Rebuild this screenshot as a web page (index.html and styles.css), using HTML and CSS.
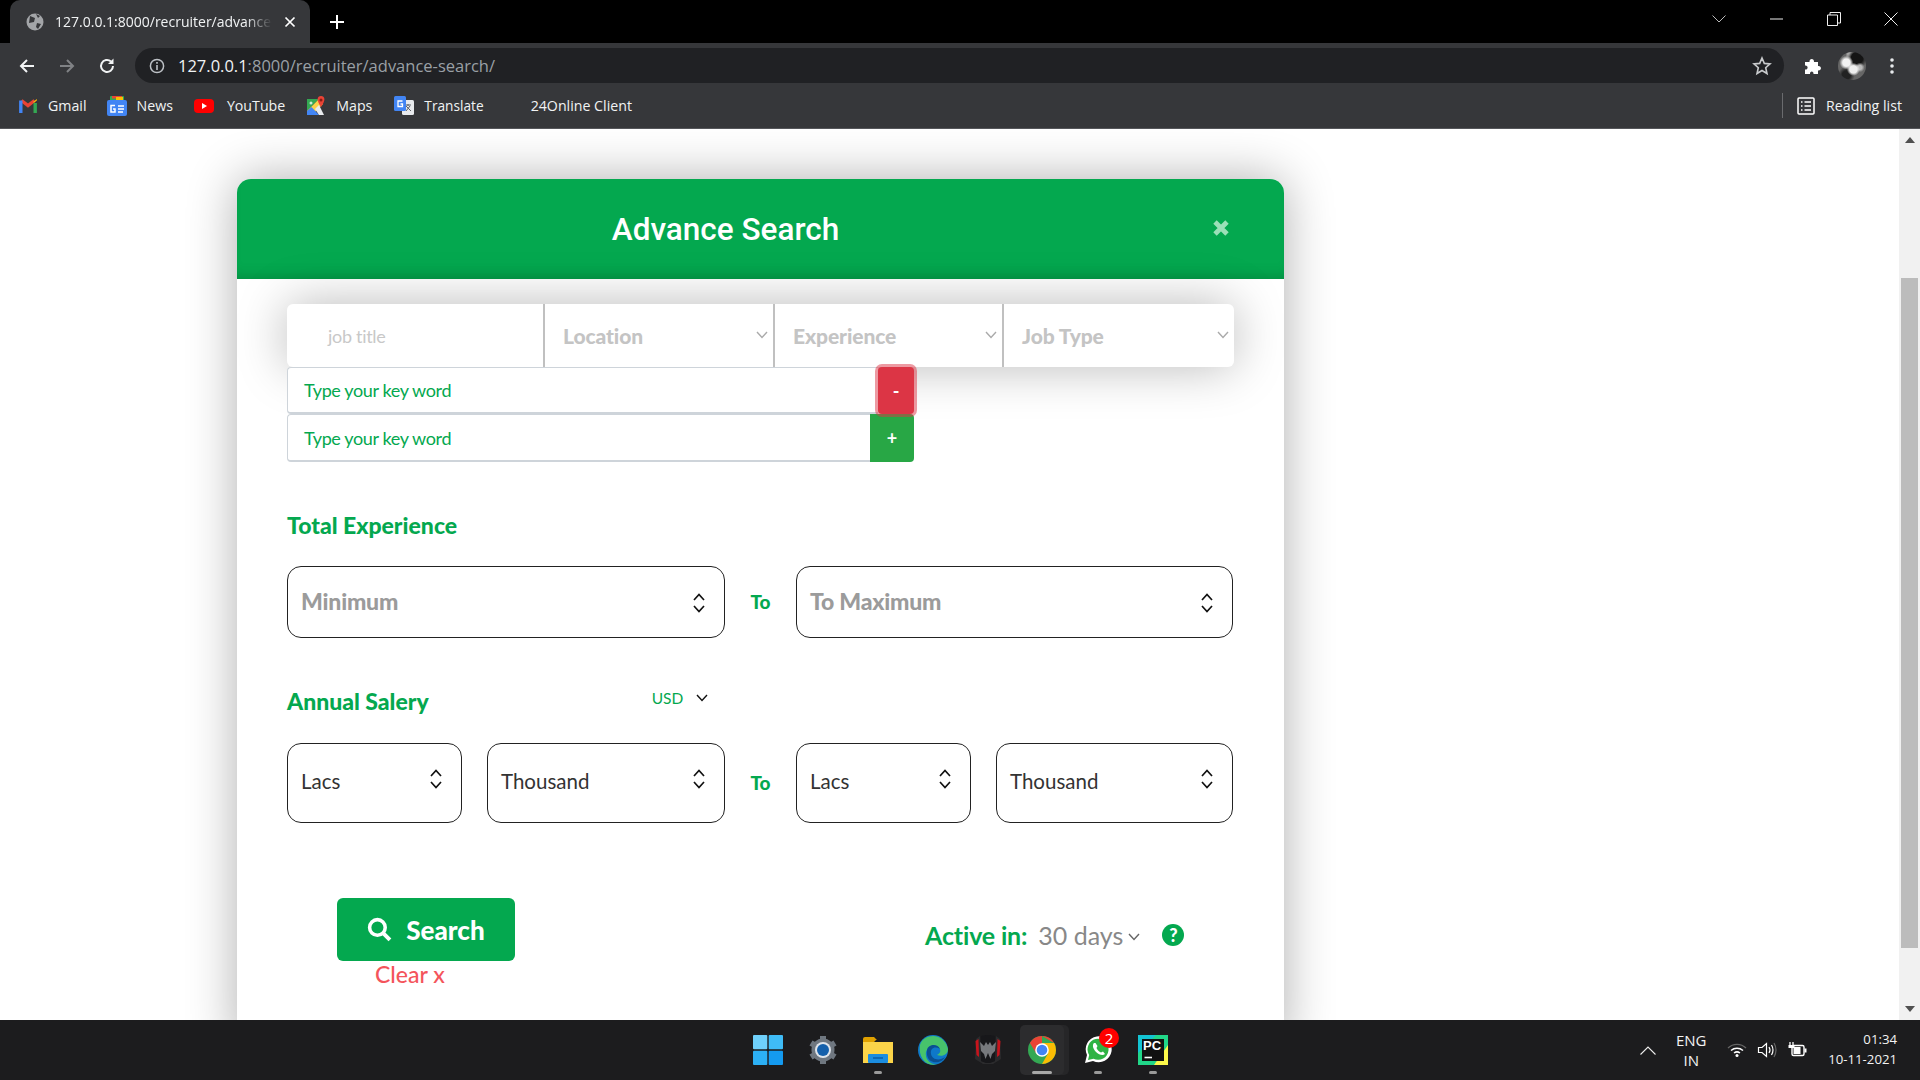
FILE: index.html
```html
<!DOCTYPE html>
<html lang="en">
<head>
    <meta charset="UTF-8">
    <meta name="viewport" content="width=device-width, initial-scale=1.0">
    <title>Advance Search</title>
    <link rel="stylesheet" href="styles.css">
</head>
<body>
    <svg class="defs" width="0" height="0">
        <symbol id="updown" viewBox="0 0 14 22">
            <path d="M2 8 L7 2.5 L12 8 M2 14 L7 19.5 L12 14" fill="none" stroke="#111" stroke-width="1.7"/>
        </symbol>
        <symbol id="down" viewBox="0 0 12 8">
            <path d="M1 1 L6 6.5 L11 1" fill="none" stroke="currentColor" stroke-width="1.4"/>
        </symbol>
    </svg>

    <!-- browser chrome -->
    <div class="tabbar">
        <div class="tab">
            <svg class="favicon" viewBox="0 0 18 18"><circle cx="9" cy="9" r="8.5" fill="#a3a5a8"/><path d="M4 3 L9 5 L8 9 L3 10 Z M11 10 L15 11 L12 16 L10 14 Z M10 1 L14 3 L12 5 Z" fill="#36373a"/></svg>
            <span class="tab-title">127.0.0.1:8000/recruiter/advance-</span>
            <svg class="tab-close" viewBox="0 0 12 12"><path d="M1.5 1.5 L10.5 10.5 M10.5 1.5 L1.5 10.5" stroke="#fff" stroke-width="1.7"/></svg>
        </div>
        <svg class="new-tab" viewBox="0 0 16 16"><path d="M8 1 V15 M1 8 H15" stroke="#fff" stroke-width="2"/></svg>
        <div class="window-controls">
            <svg class="win-chevron" viewBox="0 0 14 8"><path d="M.5 .5 L7 7 L13.5 .5" fill="none" stroke="#bbb"/></svg>
            <svg class="win-btn" viewBox="0 0 14 14"><path d="M0 7 H13" stroke="#eee"/></svg>
            <svg class="win-btn" viewBox="0 0 14 14"><path d="M.5 3 H10.5 V13.5 H.5 Z M3 3 V.5 H13.5 V11 H10.5" fill="none" stroke="#eee"/></svg>
            <svg class="win-btn" viewBox="0 0 14 14"><path d="M.5 .5 L13.5 13.5 M13.5 .5 L.5 13.5" stroke="#eee"/></svg>
        </div>
    </div>

    <div class="toolbar">
        <svg class="nav-icon" viewBox="0 0 18 18"><path d="M16 9 H3 M9 3 L3 9 L9 15" fill="none" stroke="#f1f3f4" stroke-width="2"/></svg>
        <svg class="nav-icon" viewBox="0 0 18 18"><path d="M2 9 H15 M9 3 L15 9 L9 15" fill="none" stroke="#808285" stroke-width="2"/></svg>
        <svg class="nav-icon" viewBox="0 0 18 18"><path d="M15 9 A6 6 0 1 1 13 4.5" fill="none" stroke="#f1f3f4" stroke-width="2"/><path d="M15.5 1.5 V7 H10 Z" fill="#f1f3f4"/></svg>
        <div class="omnibox">
            <svg class="info" viewBox="0 0 16 16"><circle cx="8" cy="8" r="6.6" fill="none" stroke="#bdc1c6" stroke-width="1.5"/><path d="M8 7 V12 M8 4 V5.7" stroke="#bdc1c6" stroke-width="1.6"/></svg>
            <span class="url"><b>127.0.0.1</b>:8000/recruiter/advance-search/</span>
            <svg class="star" viewBox="0 0 20 20"><path d="M10 2 L12.3 7.4 L18 7.9 L13.7 11.7 L15 17.5 L10 14.5 L5 17.5 L6.3 11.7 L2 7.9 L7.7 7.4 Z" fill="none" stroke="#c8cacc" stroke-width="1.6"/></svg>
        </div>
        <svg class="puzzle" viewBox="0 0 20 20"><path d="M2 6 H6.5 C6 2 11.500 2 11 6 H15 V10 C19 9.500 19 15 15 14.500 V18 H10.500 C11 14.500 6.500 14.500 7 18 H2 V13.500 C5.500 14 5.500 9 2 9.500 Z" fill="#fff"/></svg>
        <div class="avatar"></div>
        <svg class="dots" viewBox="0 0 4 18"><circle cx="2" cy="3" r="1.800" fill="#e8eaed"/><circle cx="2" cy="9" r="1.800" fill="#e8eaed"/><circle cx="2" cy="15" r="1.800" fill="#e8eaed"/></svg>
    </div>

    <div class="bookmarks">
        <a class="mark mark-gmail">
            <svg viewBox="0 0 20 20"><path d="M3.500 4.500 L10 9.500 L16.500 4.500" fill="none" stroke="#ea4335" stroke-width="3.400"/><path d="M2.800 17 V4.500" stroke="#4285f4" stroke-width="3.400"/><path d="M17.200 17 V7" stroke="#34a853" stroke-width="3.400"/><path d="M15.500 7 L18.900 4.500 V3 L15.500 5.500 Z" fill="#fbbc04"/></svg>
            Gmail
        </a>
        <a class="mark mark-news">
            <svg viewBox="0 0 20 20"><rect x="3" y="0" width="14" height="6" rx="1" fill="#34a853"/><rect x="5" y="0" width="10" height="2.500" fill="#ea4335"/><rect x="9" y="1" width="7" height="3" fill="#fbbc04"/><rect x="0" y="4" width="20" height="16" rx="2" fill="#4285f4"/><path d="M11 10 H17 M11 13 H17 M11 16 H16" stroke="#fff" stroke-width="1.500"/><path d="M8 9.500 H4 V16 H8 V13 H6" fill="none" stroke="#fff" stroke-width="1.500"/></svg>
            News
        </a>
        <a class="mark mark-youtube">
            <svg viewBox="0 0 20 14"><rect width="20" height="14" rx="4" fill="#f00"/><path d="M8 4 L13 7 L8 10 Z" fill="#fff"/></svg>
            YouTube
        </a>
        <a class="mark mark-maps">
            <svg viewBox="0 0 20 20"><path d="M1 3 H13 L1 15 Z" fill="#34a853"/><path d="M1 15 L13 3 L17 8 L6 19 H1 Z" fill="#fbd24a"/><path d="M1 15 L5.500 11 L13 19 H1 Z" fill="#4285f4"/><path d="M9 13 L13 9 L18 19 H13 Z" fill="#e8eaed"/><path d="M15 0 C11 0 10 4 15 11 C20 4 19 0 15 0 Z" fill="#ea4335"/><circle cx="15" cy="4" r="1.500" fill="#8a1c14"/><circle cx="5" cy="7" r="1.500" fill="#cfe8d6"/></svg>
            Maps
        </a>
        <a class="mark mark-translate">
            <svg viewBox="0 0 20 20"><rect x="8" y="4" width="12" height="15" rx="1.500" fill="#e8eaed"/><path d="M11 9 H17 M14 8 V10 M12 15 L16 10 M12 10 L17 15" stroke="#5f6368" stroke-width="1"/><rect width="12" height="15" rx="1.500" fill="#4285f4"/><path d="M8.500 5 H4 V10.500 H8.500 V8 H6.500" fill="none" stroke="#fff" stroke-width="1.300"/></svg>
            <span class="mark-narrow">Translate</span>
        </a>
        <a class="mark mark-plain">24Online Client</a>
        <div class="reading">
            <svg viewBox="0 0 18 18"><rect x="1" y="1" width="16" height="16" rx="1" fill="none" stroke="#fff" stroke-width="1.500"/><path d="M4 5 H5.500 M7.500 5 H14 M4 9 H5.500 M7.500 9 H14 M4 13 H5.500 M7.500 13 H14" stroke="#fff" stroke-width="1.500"/></svg>
            Reading list
        </div>
    </div>

    <!-- page -->
    <div class="viewport">
        <div class="page">
            <div class="modal">
                <div class="modal-head">
                    <h1>Advance Search</h1>
                    <svg class="modal-close" viewBox="0 0 12 12"><path d="M2 2 L10 10 M10 2 L2 10" stroke="#9be0b8" stroke-width="3.200"/></svg>
                </div>
                <div class="modal-body">
                    <div class="filters">
                        <div class="filter filter-title">job title</div>
                        <div class="filter">Location<svg class="filter-arrow"><use href="#down"/></svg></div>
                        <div class="filter filter-mid">Experience<svg class="filter-arrow"><use href="#down"/></svg></div>
                        <div class="filter filter-last">Job Type<svg class="filter-arrow"><use href="#down"/></svg></div>
                    </div>

                    <div class="keyword">
                        <div class="keyword-input">Type your key word</div>
                        <div class="btn-minus">-</div>
                    </div>
                    <div class="keyword keyword-add">
                        <div class="keyword-input">Type your key word</div>
                        <div class="btn-plus">+</div>
                    </div>

                    <h3 class="label label-exp">Total Experience</h3>
                    <div class="range">
                        <div class="box box-big">Minimum<svg class="updown"><use href="#updown"/></svg></div>
                        <div class="to">To</div>
                        <div class="box box-big">To Maximum<svg class="updown"><use href="#updown"/></svg></div>
                    </div>

                    <div class="salary-head">
                        <h3 class="label">Annual Salery</h3>
                        <div class="currency">USD<svg class="currency-arrow"><use href="#down"/></svg></div>
                    </div>
                    <div class="range range-salary">
                        <div class="pair">
                            <div class="box box-small">Lacs<svg class="updown updown-top"><use href="#updown"/></svg></div>
                            <div class="box box-small">Thousand<svg class="updown updown-top"><use href="#updown"/></svg></div>
                        </div>
                        <div class="to to-low">To</div>
                        <div class="pair">
                            <div class="box box-small">Lacs<svg class="updown updown-top"><use href="#updown"/></svg></div>
                            <div class="box box-small">Thousand<svg class="updown updown-top"><use href="#updown"/></svg></div>
                        </div>
                    </div>

                    <div class="actions">
                        <div class="search-col">
                            <button class="btn-search">
                                <svg viewBox="0 0 24 24"><circle cx="10" cy="10" r="7.500" fill="none" stroke="#fff" stroke-width="3.400"/><path d="M15.500 15.500 L22 22" stroke="#fff" stroke-width="3.800"/></svg>
                                Search
                            </button>
                            <a class="clear">Clear x</a>
                        </div>
                        <div class="active-in">
                            <b>Active in:</b>
                            <span>30 days</span>
                            <svg class="active-arrow"><use href="#down"/></svg>
                            <span class="help">?</span>
                        </div>
                    </div>
                </div>
            </div>
        </div>
        <div class="scrollbar">
            <svg class="scroll-arrow" viewBox="0 0 10 6"><path d="M5 0 L10 6 H0 Z" fill="#505050"/></svg>
            <div class="scroll-track"><div class="scroll-thumb"></div></div>
            <svg class="scroll-arrow" viewBox="0 0 10 6"><path d="M0 0 H10 L5 6 Z" fill="#505050"/></svg>
        </div>
    </div>

    <!-- windows taskbar -->
    <div class="taskbar">
        <div class="task-icons">
            <div class="task">
                <svg viewBox="0 0 30 30"><rect x="0" y="0" width="14.300" height="14.300" rx="1" fill="#6fd0fb"/><rect x="15.700" y="0" width="14.300" height="14.300" rx="1" fill="#3fbcf7"/><rect x="0" y="15.700" width="14.300" height="14.300" rx="1" fill="#2cb0f5"/><rect x="15.700" y="15.700" width="14.300" height="14.300" rx="1" fill="#149af0"/></svg>
            </div>
            <div class="task">
                <svg viewBox="0 0 30 30"><circle cx="15" cy="15" r="11.500" fill="#6f7780"/><path d="M15 1 V29 M3 8 L27 22 M27 8 L3 22" stroke="#6f7780" stroke-width="6"/><circle cx="15" cy="15" r="8" fill="#dfe4ea"/><circle cx="15" cy="15" r="6" fill="#1560ab"/></svg>
            </div>
            <div class="task task-open">
                <svg viewBox="0 0 30 30"><path d="M0 4 Q0 2 2 2 H11 L14 5 H13 L10 8 H0 Z" fill="#e0a100"/><path d="M0 7 H30 V28 H0 Z" fill="#fbd449"/><rect x="5" y="19" width="20" height="9" rx="1" fill="#1b8de0"/><path d="M10 23 H20" stroke="#0a5ea8" stroke-width="1.500"/></svg>
            </div>
            <div class="task">
                <svg viewBox="0 0 30 30"><circle cx="15" cy="15" r="15" fill="#0e78c9"/><path d="M2 10 C6 -2 26 -3 30 14 C30 20 24 22 19 20 C25 17 22 11 16 11 C9 11 6 18 9 24 C12 29 18 30 20 29 C10 32 0 25 2 10 Z" fill="#47c36b"/><path d="M9 15 C10 9 20 8 22 14 C17 11 12 13 13 19 C14 25 22 26 27 22 C23 30 7 30 9 15 Z" fill="#0a4f92"/></svg>
            </div>
            <div class="task">
                <svg viewBox="0 0 30 30"><path d="M3 4 L7 1 L8 26 L14 28 H16 L22 26 L23 1 L27 4 L28 24 L20 29 H10 L2 24 Z" fill="#2b2b2d"/><path d="M8 1 L13 0 V28 L8 26 Z M17 0 L22 1 L22 26 L17 28 Z M13 0 H17 V28 H13 Z" fill="#17171a"/><path d="M2.500 6 L5.500 4 L6 22 L3.500 20 Z M27.500 6 L24.500 4 L24 22 L26.500 20 Z" fill="#c8141c"/><path d="M7 7 L11 11 L13 7 L15 10 L17 7 L19 11 L23 7 L22 16 L19 19 L17.500 24 L15 18 L12.500 24 L11 19 L8 16 Z" fill="#77797d"/></svg>
            </div>
            <div class="task task-chrome">
                <svg viewBox="0 0 30 30"><circle cx="15" cy="15" r="14" fill="#34a853"/><path d="M15 1 A14 14 0 0 1 27.100 8 L15 8 Z M15 1 A14 14 0 0 0 2.900 8 L9 18 L15 8 H27.100 Z" fill="#ea4335"/><path d="M27.100 8 A14 14 0 0 1 15 29 L21 18.500 L15 8 Z" fill="#fbbc04"/><circle cx="15" cy="15" r="6.800" fill="#fff"/><circle cx="15" cy="15" r="5.300" fill="#4285f4"/></svg>
            </div>
            <div class="task task-open">
                <svg viewBox="0 0 30 30"><path d="M2 28 L4 20 A13 13 0 1 1 10 26 Z" fill="#fff"/><path d="M5 25 L6.200 20 A10.500 10.500 0 1 1 10.500 23.800 Z" fill="#2fb344"/><path d="M11 8 C9 10 10 14 13 17 C16 20 20 21 22 19 L20 16.500 L18 17.500 C16 16.500 14.500 15 13.500 13 L14.500 11 L12.500 8 Z" fill="#fff"/></svg>
                <span class="badge">2</span>
            </div>
            <div class="task task-open">
                <svg viewBox="0 0 30 30"><rect width="30" height="30" fill="#21d789"/><path d="M0 0 H18 L0 18 Z" fill="#13c4d3"/><path d="M30 10 V30 H16 Z" fill="#fcf84a"/><rect x="4" y="4" width="22" height="22" fill="#111"/><path d="M6.500 22.500 H14" stroke="#fff" stroke-width="1.600"/></svg>
                <span class="pc">PC</span>
            </div>
        </div>
        <div class="tray">
            <svg class="tray-up" viewBox="0 0 16 9"><path d="M.5 8.500 L8 1 L15.500 8.500" fill="none" stroke="#eee" stroke-width="1.100"/></svg>
            <div class="lang">ENG<br>IN</div>
            <svg class="tray-icon" viewBox="0 0 20 16"><path d="M1 6 A13 13 0 0 1 19 6" fill="none" stroke="#666" stroke-width="1.300"/><path d="M4 8.500 A9 9 0 0 1 16 8.500 M7 11 A5 5 0 0 1 13 11" fill="none" stroke="#fff" stroke-width="1.500"/><circle cx="10" cy="13.500" r="1.500" fill="#fff"/></svg>
            <svg class="tray-icon" viewBox="0 0 20 16"><path d="M1.500 5.500 H5 L9.500 1.500 V14.500 L5 10.500 H1.500 Z" fill="none" stroke="#fff" stroke-width="1.200"/><path d="M12 5 Q14 8 12 11 M14.500 3 Q17.500 8 14.500 13" fill="none" stroke="#fff" stroke-width="1.200"/><path d="M17 1 Q21 8 17 15" fill="none" stroke="#666" stroke-width="1.200"/></svg>
            <svg class="tray-icon" viewBox="0 0 20 16"><path d="M3 0 V3 M6 0 V3" stroke="#fff" stroke-width="1.300"/><rect x="1.500" y="3" width="6" height="3" fill="#fff"/><rect x="5" y="3.500" width="12" height="10" rx="1.500" fill="none" stroke="#fff" stroke-width="1.400"/><rect x="6.500" y="5" width="7" height="7" fill="#fff"/><rect x="17.500" y="6.500" width="2" height="4" fill="#fff"/></svg>
            <div class="clock">01:34<br>10-11-2021</div>
        </div>
    </div>
</body>
</html>
```

FILE: styles.css
```css
* {
    box-sizing: border-box;
}

html, body {
    margin: 0;
    height: 100%;
    overflow: hidden;
}

body {
    display: flex;
    flex-direction: column;
    font-family: "Lato", "Liberation Sans", sans-serif;
    background: #fff;
}

.defs {
    position: absolute;
}

/* browser chrome */
.tabbar {
    height: 43px;
    flex: none;
    background: #000;
    display: flex;
    align-items: flex-end;
    padding-left: 10px;
}

.tab {
    width: 300px;
    height: 43px;
    margin-top: 0;
    background: #36373a;
    border-radius: 10px 10px 0 0;
    display: flex;
    align-items: center;
    padding: 0 14px 0 16px;
    color: #f1f3f4;
    font: 14px "Open Sans", sans-serif;
}

.favicon {
    width: 18px;
    height: 18px;
    flex: none;
    margin-right: 11px;
}

.tab-title {
    flex: 1;
    min-width: 0;
    white-space: nowrap;
    -webkit-mask-image: linear-gradient(90deg, #000 88%, transparent);
    mask-image: linear-gradient(90deg, #000 88%, transparent);
}

.tab-close {
    width: 12px;
    height: 12px;
    margin-left: 12px;
    flex: none;
}

.new-tab {
    width: 16px;
    height: 16px;
    margin: 0 0 13px 19px;
}

.window-controls {
    margin-left: auto;
    align-self: stretch;
    display: flex;
    align-items: center;
    padding: 0 22px 5px 0;
}

.win-chevron {
    width: 14px;
    height: 8px;
    margin-right: 44px;
}

.win-btn {
    width: 14px;
    height: 14px;
    margin-left: 43px;
}

.win-chevron + .win-btn {
    margin-left: 0;
}

.toolbar {
    height: 40px;
    flex: none;
    background: #36373a;
    padding: 5px 0 0 18px;
    display: flex;
    align-items: center;
}

.nav-icon {
    width: 18px;
    height: 18px;
    margin-right: 22px;
    flex: none;
}

.omnibox {
    width: 1649px;
    height: 35px;
    margin-left: -3px;
    background: #202124;
    border-radius: 18px;
    display: flex;
    align-items: center;
    padding: 0 12px 0 14px;
    font: 16.5px "Open Sans", sans-serif;
    color: #9aa0a6;
}

.info {
    width: 16px;
    height: 16px;
    margin-right: 13px;
}

.url b {
    font-weight: 400;
    color: #f1f3f4;
}

.star {
    width: 20px;
    height: 20px;
    margin-left: auto;
}

.puzzle {
    width: 20px;
    height: 20px;
    margin-left: 19px;
}

.avatar {
    width: 28px;
    height: 28px;
    margin-left: 15px;
    border-radius: 50%;
    background:
        radial-gradient(circle at 30% 38%, #f2f2f2 0 14%, transparent 26%),
        radial-gradient(circle at 55% 62%, #eee 0 16%, transparent 28%),
        radial-gradient(circle at 78% 55%, #bbb 0 8%, transparent 18%),
        radial-gradient(circle at 68% 22%, #141414 0 20%, transparent 36%),
        radial-gradient(circle at 30% 82%, #222 0 14%, transparent 28%),
        radial-gradient(circle at 50% 10%, #ddd 0 10%, transparent 22%),
        #666;
}

.dots {
    width: 4px;
    height: 18px;
    margin-left: 24px;
}

.bookmarks {
    height: 46px;
    flex: none;
    background: #36373a;
    border-bottom: 1px solid #55565a;
    padding: 0 18px 0 18px;
    display: flex;
    align-items: center;
    color: #f1f3f4;
    font: 14.2px "Open Sans", sans-serif;
}

.mark {
    display: flex;
    align-items: center;
    gap: 10px;
    white-space: nowrap;
}

.mark svg {
    width: 20px;
    height: 20px;
    flex: none;
}

.mark-news {
    margin-left: 20px;
}

.mark-youtube {
    margin-left: 21px;
    gap: 13px;
}

.mark-maps {
    margin-left: 21px;
}

.mark-translate {
    margin-left: 22px;
    gap: 10px;
}

.mark-narrow {
    font-size: 13.700px;
}

.mark-plain {
    margin-left: 47px;
}

.reading {
    margin-left: auto;
    height: 25px;
    padding-left: 14px;
    border-left: 1px solid #6a6b6e;
    display: flex;
    align-items: center;
    gap: 11px;
    white-space: nowrap;
}

.reading svg {
    width: 18px;
    height: 18px;
}

/* page */
.viewport {
    flex: 1;
    min-height: 0;
    display: flex;
    overflow: hidden;
}

.page {
    flex: 1;
    padding: 50px 0 0 237px;
    overflow: hidden;
}

.modal {
    width: 1047px;
    background: #fff;
    border-radius: 14px 14px 0 0;
    box-shadow: 0 0 50px rgba(0, 0, 0, 0.32);
    padding-bottom: 60px;
}

.modal-head {
    height: 100px;
    position: relative;
    background: #04a84f;
    border-radius: 14px 14px 0 0;
    box-shadow: inset 0 -12px 12px -8px rgba(0, 90, 40, 0.3);
    display: flex;
    align-items: center;
    justify-content: center;
    padding: 0 70px 0 0;
}

.modal-head h1 {
    margin: 0;
    color: #fff;
    font: 500 31.500px "Roboto", sans-serif;
}

.modal-close {
    position: absolute;
    right: 54px;
    top: 40px;
    width: 18px;
    height: 18px;
}

.modal-body {
    padding: 25px 50px 0 50px;
}

.filters {
    height: 63px;
    display: flex;
    background: #fff;
    border-radius: 6px;
    box-shadow: 0 0 50px rgba(0, 0, 0, 0.28);
    position: relative;
}

.filter {
    flex: 0 0 230px;
    position: relative;
    display: flex;
    align-items: center;
    padding-left: 18px;
    border-left: 2px solid #c0c0c0;
    color: #c4c4c4;
    font-size: 21px;
    font-weight: 900;
    letter-spacing: -0.1px;
}

.filter-title {
    flex-basis: 256px;
    padding-left: 41px;
    border-left: 0;
    color: #c8c8c8;
    font-size: 18px;
    font-weight: 400;
    letter-spacing: -0.3px;
}

.filter-mid {
    flex-basis: 229px;
}

.filter-last {
    flex: 1;
}

.filter-arrow {
    position: absolute;
    right: 5px;
    top: 27px;
    width: 12px;
    height: 8px;
    color: #aaa;
}

.keyword {
    width: 627px;
    height: 47px;
    display: flex;
    position: relative;
}

.keyword-add {
    height: 48px;
}

.keyword-input {
    flex: 1;
    display: flex;
    align-items: center;
    padding-left: 16px;
    background: #fff;
    border: 1px solid #ced4da;
    border-bottom-width: 2px;
    border-right: 0;
    border-radius: 4px 0 0 4px;
    color: #04a84f;
    font-size: 18px;
    letter-spacing: -0.36px;
}

.btn-minus, .btn-plus {
    display: flex;
    align-items: center;
    justify-content: center;
    color: #fff;
    font-size: 18px;
    font-weight: 700;
}

.btn-minus {
    flex: 0 0 36px;
    background: #dc3545;
    border-radius: 4px;
    box-shadow: 0 0 0 3px rgba(220, 53, 69, 0.5);
    z-index: 1;
}

.btn-plus {
    flex: 0 0 44px;
    background: #28a745;
    border-radius: 0 4px 4px 0;
}

.label {
    margin: 0;
    color: #04a84f;
    font-size: 23px;
    line-height: 28px;
    font-weight: 900;
}

.label-exp {
    margin-top: 49px;
}

.range {
    display: grid;
    grid-template-columns: 438px 71px 437px;
    margin-top: 27px;
}

.range-salary {
    margin-top: 28px;
}

.box {
    display: flex;
    align-items: center;
    position: relative;
    border: 1.5px solid #222;
    border-radius: 14px;
    padding-left: 13px;
    background: #fff;
}

.box-big {
    height: 72px;
    padding-bottom: 2px;
    color: #9b9b9b;
    font-size: 23px;
    font-weight: 900;
    letter-spacing: -0.2px;
}

.box-small {
    height: 80px;
    padding-bottom: 4px;
    color: #333;
    font-size: 20.500px;
}

.updown {
    position: absolute;
    right: 18px;
    top: 25px;
    width: 14px;
    height: 22px;
}

.updown-top {
    top: 24px;
}

.to {
    display: flex;
    align-items: center;
    justify-content: center;
    padding-bottom: 2px;
    color: #04a84f;
    font-size: 19px;
    font-weight: 900;
}

.pair {
    display: grid;
    grid-template-columns: 175px 1fr;
    gap: 25px;
}

.salary-head {
    margin-top: 49px;
    display: flex;
    align-items: flex-start;
}

.currency {
    margin-left: 223px;
    display: flex;
    align-items: center;
    color: #04a84f;
    font-size: 15.500px;
    line-height: 24px;
    gap: 13px;
    position: relative;
    top: -1px;
}

.currency-arrow {
    width: 12px;
    height: 8px;
    color: #111;
}

.actions {
    margin-top: 75px;
    display: flex;
}

.search-col {
    margin-left: 50px;
    display: flex;
    flex-direction: column;
}

.btn-search {
    width: 178px;
    height: 63px;
    border: 0;
    border-radius: 6px;
    background: #04a84f;
    color: #fff;
    display: flex;
    align-items: center;
    justify-content: center;
    gap: 14px;
    font: 900 26px "Lato", sans-serif;
}

.btn-search svg {
    width: 25px;
    height: 25px;
}

.clear {
    margin-left: 38px;
    color: #f4545b;
    font-size: 23px;
    line-height: 26px;
    font-weight: 500;
}

.active-in {
    margin-left: 410px;
    height: 74px;
    display: flex;
    align-items: center;
    font-size: 25px;
    color: #888;
}

.active-in b {
    color: #04a84f;
    font-weight: 700;
    letter-spacing: -0.15px;
    margin-right: 11px;
}

.active-arrow {
    width: 12px;
    height: 8px;
    margin: 3px 0 0 5px;
    color: #666;
}

.help {
    width: 22px;
    height: 22px;
    margin-left: 22px;
    border-radius: 50%;
    background: #04a84f;
    color: #fff;
    display: flex;
    align-items: center;
    justify-content: center;
    font-size: 18px;
    font-weight: 900;
}

.scrollbar {
    width: 21px;
    flex: none;
    background: #f1f1f1;
    display: flex;
    flex-direction: column;
    align-items: center;
    padding: 8px 0;
}

.scroll-arrow {
    width: 10px;
    height: 6px;
    flex: none;
}

.scroll-track {
    flex: 1;
    width: 100%;
    padding: 135px 2px 58px;
}

.scroll-thumb {
    height: 100%;
    background: #bcbcbc;
}

/* windows taskbar */
.taskbar {
    height: 60px;
    flex: none;
    background: #1c1c1e;
    display: flex;
    align-items: center;
    position: relative;
    color: #f3f3f3;
    font: 15px "Open Sans", sans-serif;
}

.task-icons {
    margin-left: 741px;
    display: flex;
    gap: 1px;
}

.task {
    width: 54px;
    height: 50px;
    display: flex;
    align-items: center;
    justify-content: center;
    position: relative;
}

.task svg {
    width: 30px;
    height: 30px;
}

.task-open::after {
    content: "";
    position: absolute;
    bottom: 1px;
    left: 50%;
    width: 8px;
    height: 3px;
    margin-left: -4px;
    border-radius: 2px;
    background: #9a9a9a;
}

.task-chrome {
    background: #2c2c2e;
    border-radius: 5px;
    box-shadow: 5px 0 0 #262628;
    width: 44px;
    margin: 0 6px 0 4px;
}

.task-chrome::after {
    content: "";
    position: absolute;
    bottom: 1px;
    left: 50%;
    width: 20px;
    height: 3px;
    margin-left: -10px;
    border-radius: 2px;
    background: #a8a8a8;
}

.badge {
    position: absolute;
    top: 3px;
    right: 6px;
    width: 20px;
    height: 20px;
    border-radius: 50%;
    background: #f00;
    color: #fff;
    font-size: 15px;
    line-height: 20px;
    text-align: center;
}

.pc {
    position: absolute;
    left: 17px;
    top: 13px;
    color: #fff;
    font: 700 13px "Liberation Sans", sans-serif;
}

.tray {
    margin-left: auto;
    display: flex;
    align-items: center;
    padding-right: 23px;
}

.tray-up {
    width: 16px;
    height: 9px;
}

.lang {
    margin-left: 14px;
    width: 42px;
    text-align: center;
    line-height: 20px;
    font-size: 15px;
}

.tray-icon {
    width: 20px;
    height: 16px;
    margin-left: 10px;
}

.lang + .tray-icon {
    margin-left: 15px;
}

.clock {
    margin-left: 21px;
    padding-bottom: 2px;
    text-align: right;
    line-height: 20px;
    font-size: 13.200px;
}
```
